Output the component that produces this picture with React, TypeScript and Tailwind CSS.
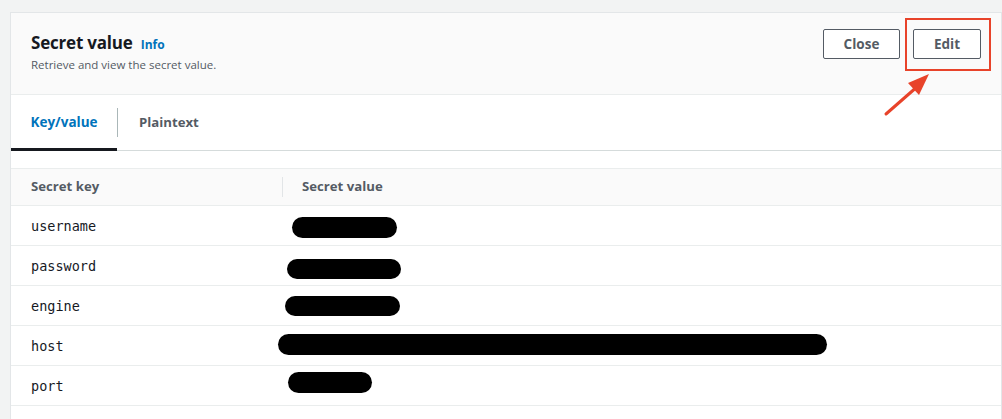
import React from 'react';

const rows = [
  { key: 'username', x: 9, top: 11, w: 105, h: 21 },
  { key: 'password', x: 4, top: 13, w: 114, h: 20 },
  { key: 'engine', x: 2, top: 10, w: 115, h: 20 },
  { key: 'host', x: -5, top: 8, w: 549, h: 21 },
  { key: 'port', x: 5, top: 6, w: 84, h: 21 },
];

export default function App() {
  return (
    <div className="relative w-[1002px] h-[419px] overflow-hidden bg-[#f2f3f3] pt-[12px] pl-[10px] font-['Open_Sans','Noto_Sans',sans-serif]">
      <div className="h-full bg-white border-l border-r border-t border-[#e3e6e8]">
        {/* header */}
        <div className="h-[82px] bg-[#fafafa] border-b border-[#eaeded] flex justify-between pl-[20px] pr-[20px] pt-[16px]">
          <div className="pt-[2px]">
            <div className="flex items-baseline gap-[8px]">
              <h2 className="text-[17px] font-bold text-[#16191f] leading-[24px] tracking-[-0.2px]">Secret value</h2>
              <span className="text-[12px] font-bold text-[#0073bb]">Info</span>
            </div>
            <p className="text-[11.5px] text-[#545b64] leading-[20px]">Retrieve and view the secret value.</p>
          </div>
          <div className="flex gap-[13px]">
            <button className="w-[77px] h-[30px] border border-[#545b64] rounded-[2px] bg-white text-[13.5px] font-bold text-[#545b64]">
              Close
            </button>
            <button className="w-[68px] h-[30px] border border-[#545b64] rounded-[2px] bg-white text-[13.5px] font-bold text-[#545b64]">
              Edit
            </button>
          </div>
        </div>

        {/* tabs */}
        <div className="h-[56px] flex border-b border-[#d5dbdb] items-stretch">
          <div className="w-[106px] flex items-center justify-center border-b-[3px] border-[#16191f] -mb-px pt-[2px] text-[13.5px] font-bold text-[#0073bb]">
            Key/value
          </div>
          <div className="flex items-center">
            <div className="w-px h-[29px] bg-[#aab7b8]" />
          </div>
          <div className="flex items-center pl-[21px] text-[13.2px] font-bold text-[#545b64]">Plaintext</div>
        </div>

        {/* table */}
        <div className="pt-[17px]">
          <div className="h-[38px] flex items-center bg-[#fafafa] border-t border-b border-[#eaeded] text-[13.2px] font-bold text-[#545b64]">
            <div className="w-[271px] pl-[20px]">Secret key</div>
            <div className="w-px h-[20px] bg-[#e2e5e7]" />
            <div className="pl-[19px]">Secret value</div>
          </div>
          {rows.map((r) => (
            <div key={r.key} className="h-[40px] flex border-b border-[#eaeded]">
              <div className="w-[272px] pl-[20px] pt-[2px] flex items-center font-['DejaVu_Sans_Mono',monospace] text-[13.5px] text-[#16191f]">
                {r.key}
              </div>
              <div className="flex-1">
                <div
                  className="bg-black rounded-full"
                  style={{ marginLeft: r.x, marginTop: r.top, width: r.w, height: r.h }}
                />
              </div>
            </div>
          ))}
        </div>
      </div>

      {/* annotation */}
      <div className="absolute left-[905px] top-[18px] w-[86px] h-[53px] border-[2px] border-[#e8432a]" />
      <svg className="absolute left-[880px] top-[70px]" width="60" height="50" viewBox="0 0 60 50">
        <line x1="6" y1="44" x2="38" y2="16" stroke="#e8432a" strokeWidth="3" strokeLinecap="round" />
        <polygon points="49,4 28,13 39,25" fill="#e8432a" />
      </svg>
    </div>
  );
}
